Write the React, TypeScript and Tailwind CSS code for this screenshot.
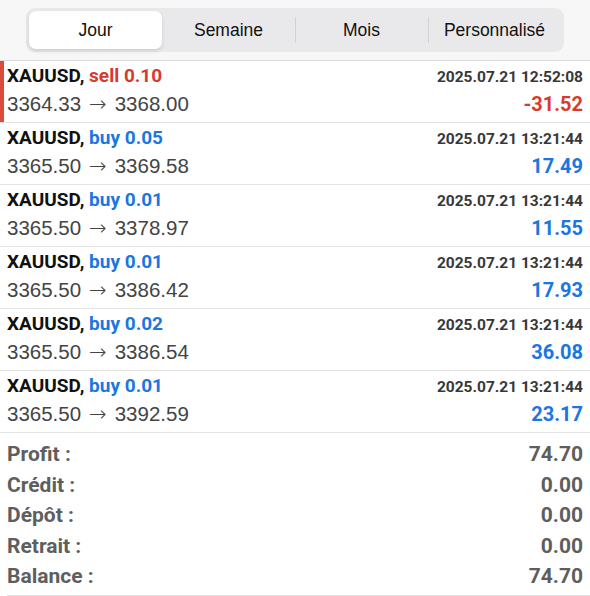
const tabs = ['Jour', 'Semaine', 'Mois', 'Personnalisé']

const deals = [
  { side: 'sell', lot: '0.10', time: '2025.07.21 12:52:08', open: '3364.33', close: '3368.00', profit: '-31.52' },
  { side: 'buy', lot: '0.05', time: '2025.07.21 13:21:44', open: '3365.50', close: '3369.58', profit: '17.49' },
  { side: 'buy', lot: '0.01', time: '2025.07.21 13:21:44', open: '3365.50', close: '3378.97', profit: '11.55' },
  { side: 'buy', lot: '0.01', time: '2025.07.21 13:21:44', open: '3365.50', close: '3386.42', profit: '17.93' },
  { side: 'buy', lot: '0.02', time: '2025.07.21 13:21:44', open: '3365.50', close: '3386.54', profit: '36.08' },
  { side: 'buy', lot: '0.01', time: '2025.07.21 13:21:44', open: '3365.50', close: '3392.59', profit: '23.17' },
]

const totals = [
  ['Profit :', '74.70'],
  ['Crédit :', '0.00'],
  ['Dépôt :', '0.00'],
  ['Retrait :', '0.00'],
  ['Balance :', '74.70'],
]

export default function App() {
  return (
    <div className="w-[590px] h-[596px] bg-white overflow-hidden font-['Roboto',sans-serif]">
      {/* period selector */}
      <div className="h-[61px] bg-[#f7f7f7] border-b border-[#d9d9d9] pt-[8px] px-[26px]">
        <div className="h-[44px] rounded-[9px] bg-[#e9e9eb] p-[3px] flex items-stretch">
          {tabs.map((t, i) => (
            <div key={t} className="flex-1 relative flex items-center justify-center">
              {i === 0 && (
                <div className="absolute inset-0 rounded-[7px] bg-white shadow-[0_2px_4px_rgba(0,0,0,0.12)]" />
              )}
              {i >= 2 && <div className="absolute left-0 top-[6px] bottom-[6px] w-px bg-[#d2d2d5]" />}
              <span className="relative text-[17.5px] text-[#111] font-['Liberation_Sans',sans-serif]">{t}</span>
            </div>
          ))}
        </div>
      </div>

      {/* deals */}
      {deals.map((d, i) => (
        <div
          key={i}
          className={`h-[62px] border-b border-[#e3e3e3] pl-[7px] pr-[7px] pt-[3px] ${
            i === 0 ? 'shadow-[inset_4px_0_0_#dc4a3a]' : ''
          }`}
        >
          <div className="flex items-baseline justify-between leading-[24px]">
            <div className="text-[19px] font-bold text-[#111]">
              XAUUSD,{' '}
              <span className={d.side === 'sell' ? 'text-[#d93a2e]' : 'text-[#1a76e0]'}>
                {d.side} {d.lot}
              </span>
            </div>
            <div className="text-[15.5px] font-bold text-[#383838]">{d.time}</div>
          </div>
          <div className="flex items-baseline justify-between leading-[29px]">
            <div className="text-[20.5px] text-[#444] font-['Liberation_Sans',sans-serif]">
              {d.open}
              <span className="mx-[8px] font-['DejaVu_Sans',sans-serif] font-extralight text-[21px]">→</span>
              {d.close}
            </div>
            <div
              className={`text-[20px] font-bold ${
                d.profit.startsWith('-') ? 'text-[#d93a2e]' : 'text-[#1a76e0]'
              }`}
            >
              {d.profit}
            </div>
          </div>
        </div>
      ))}

      {/* summary */}
      <div className="ml-[7px] pr-[7px] pt-[6px] pb-[3px] border-b border-[#e3e3e3]">
        {totals.map(([k, v]) => (
          <div key={k} className="flex justify-between leading-[30.5px] text-[21px] font-bold text-[#5e5e5e]">
            <span>{k}</span>
            <span>{v}</span>
          </div>
        ))}
      </div>
    </div>
  )
}
